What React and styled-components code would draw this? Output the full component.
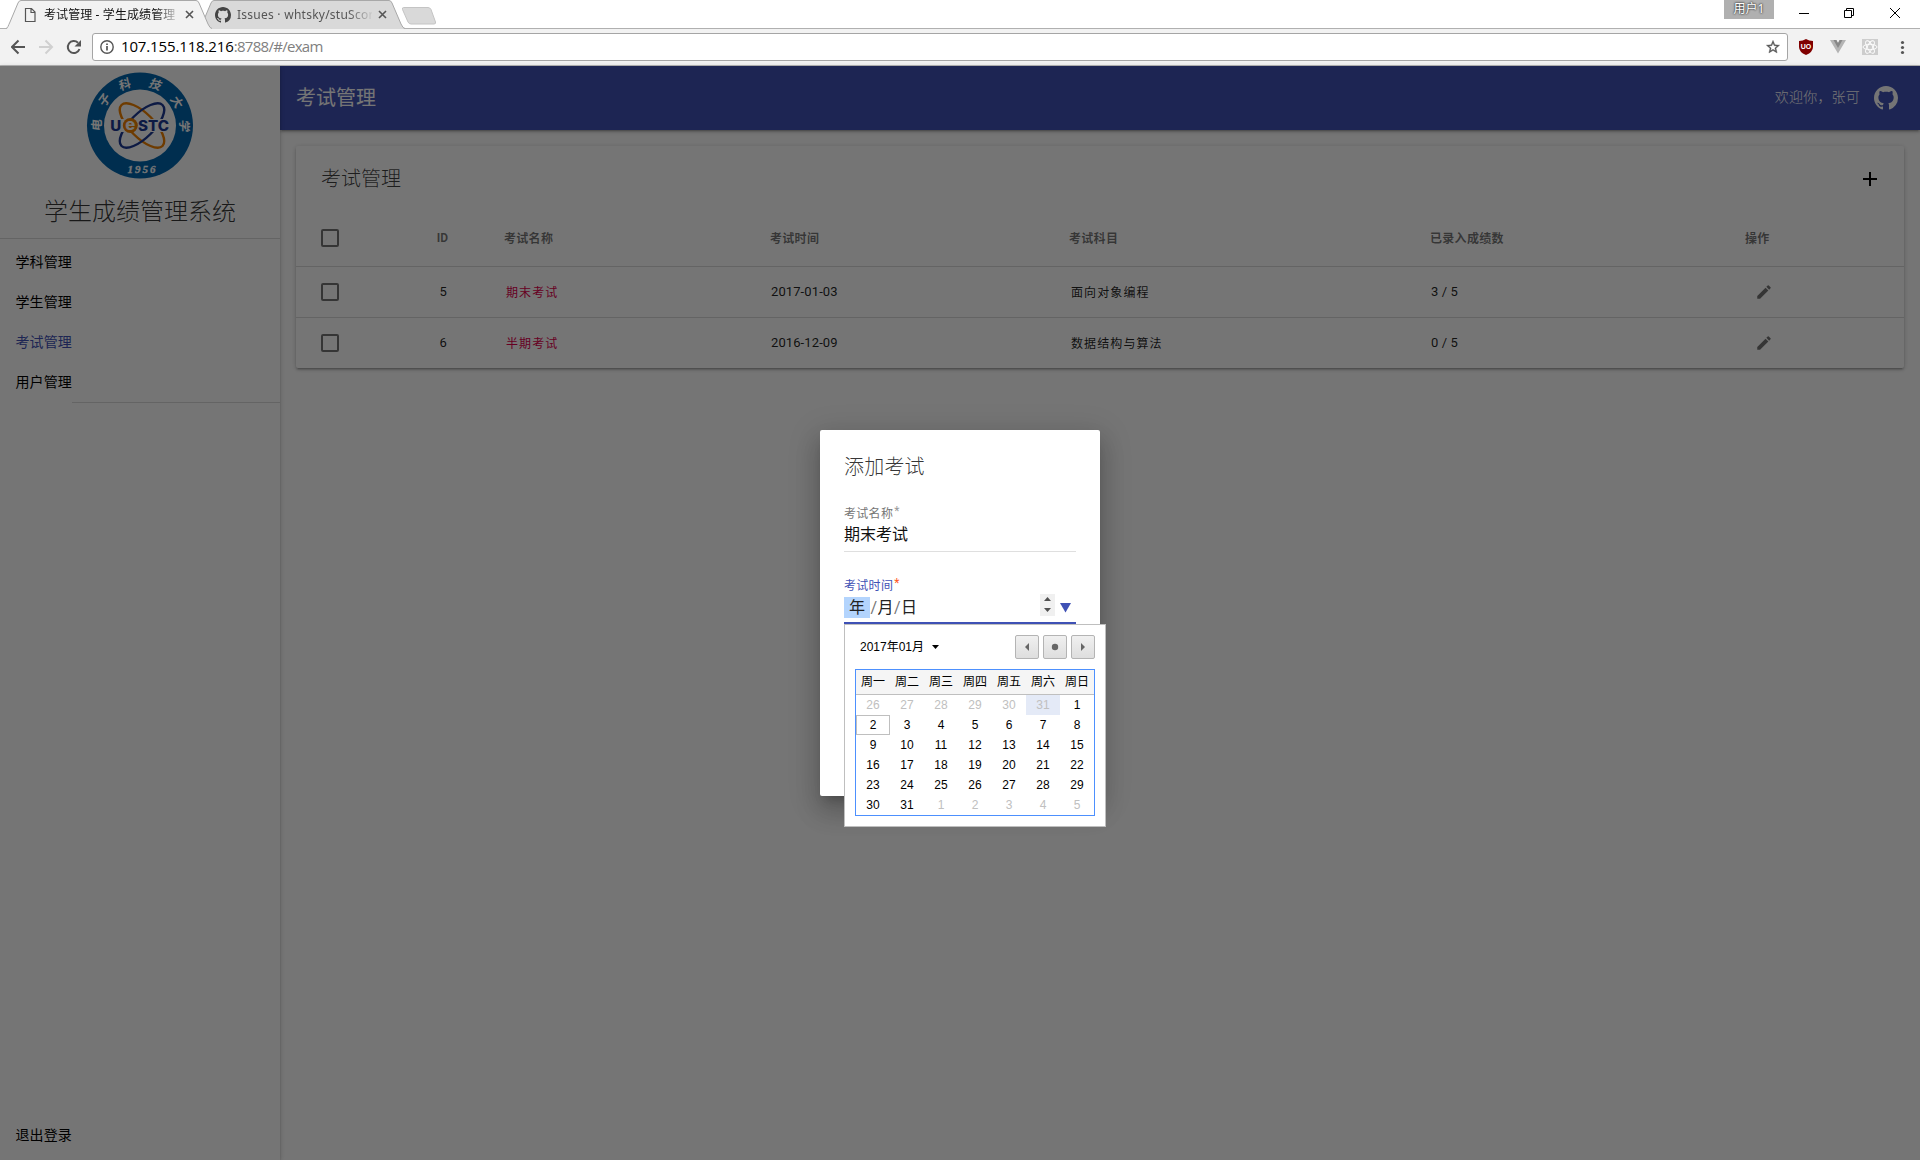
import React from "react";
import styled, { createGlobalStyle, css } from "styled-components";

const Global = createGlobalStyle`
  * { box-sizing: border-box; }
  body { margin: 0; overflow: hidden; background: #fff; font-family: Roboto, "Noto Sans CJK SC", sans-serif; }
`;

const Window = styled.div`
  display: flex;
  flex-direction: column;
  width: 1920px;
  height: 1160px;
`;

/* ---------- browser chrome ---------- */

const TabStrip = styled.div`
  display: flex;
  height: 29px;
  padding-left: 6px;
  background: #fff;
  border-bottom: 1px solid #b0b0b0;
`;

const TabBox = styled.div`
  position: relative;
  width: 206px;
  height: 29px;
  margin-right: ${(p) => (p.$active ? "-13px" : "0")};
  z-index: ${(p) => (p.$active ? 2 : 1)};
`;

const TabShape = styled.svg`
  position: absolute;
  inset: 0;
`;

const TabContent = styled.div`
  position: relative;
  display: flex;
  align-items: center;
  height: 29px;
  padding: 0 18px 0 16px;
`;

const TabTitle = styled.div`
  flex: none;
  width: 135px;
  margin-left: 6px;
  white-space: nowrap;
  font: 12px/20px "Noto Sans", "Noto Sans CJK SC", sans-serif;
  letter-spacing: ${(p) => p.$ls || 0}px;
  color: ${(p) => (p.$active ? "#111" : "#555")};
  mask-image: linear-gradient(to right, #000 82%, transparent 102%);
`;

const CloseIcon = styled.svg`
  flex: none;
  width: 9px;
  height: 9px;
  margin-left: 6px;
`;

const NewTab = styled.svg`
  flex: none;
  width: 36px;
  height: 20px;
  margin: 6px 0 0 -4px;
`;

const WindowButtons = styled.div`
  display: flex;
  align-items: flex-start;
  margin-left: auto;
`;

const UserBadge = styled.div`
  width: 50px;
  height: 19px;
  margin-right: 20px;
  background: #b0b0b0;
  color: #fff;
  text-align: center;
  text-shadow: 0 0 2px #333, 0 0 2px #333;
  font: 12px/18px "Noto Sans", "Noto Sans CJK SC", sans-serif;
`;

const ControlGlyphs = styled.svg`
  width: 126px;
  height: 28px;
`;

const AddressBar = styled.div`
  display: flex;
  align-items: center;
  height: 37px;
  padding: 0 11px;
  background: #f2f2f2;
  border-bottom: 1px solid #b5b5b5;
`;

const NavIcons = styled.svg`
  width: 81px;
  height: 34px;
`;

const UrlField = styled.div`
  display: flex;
  flex: 1;
  align-items: center;
  height: 28px;
  padding: 0 6px 0 7px;
  background: #fff;
  border: 1px solid #a5a5a5;
  border-radius: 3px;
`;

const UrlText = styled.div`
  flex: 1;
  margin-left: 7px;
  padding-bottom: 2px;
  font: 15px/24px "Open Sans", sans-serif;
  letter-spacing: -0.7px;
  color: #808080;
`;

const Host = styled.span`
  letter-spacing: -0.14px;
  color: #000;
`;

const Extensions = styled.svg`
  width: 122px;
  height: 34px;
  margin-right: -1px;
`;

/* ---------- application ---------- */

const Page = styled.div`
  position: relative;
  display: flex;
  flex: 1;
  background: #fff;
`;

const Sidebar = styled.aside`
  display: flex;
  flex-direction: column;
  width: 280px;
  z-index: 2;
  background: #fff;
  box-shadow: 0 1px 5px rgba(0, 0, 0, 0.2), 0 2px 2px rgba(0, 0, 0, 0.14), 0 3px 1px -2px rgba(0, 0, 0, 0.12);
`;

const Brand = styled.div`
  display: flex;
  flex-direction: column;
  align-items: center;
  height: 173px;
  padding-top: 6px;
  border-bottom: 1px solid rgba(0, 0, 0, 0.14);
`;

const BrandName = styled.div`
  margin-top: 14px;
  font-weight: 300;
  font-size: 24px;
  line-height: 36px;
  color: rgba(0, 0, 0, 0.8);
`;

const Menu = styled.nav`
  display: flex;
  flex-direction: column;
  padding-top: 3px;
`;

const MenuItem = styled.a`
  padding-left: 15.5px;
  font-size: 14px;
  line-height: 40px;
  letter-spacing: 0.1px;
  color: ${(p) => (p.$active ? "#3f51b5" : "#000")};
`;

const MenuEnd = styled.div`
  height: 1px;
  margin-left: 72px;
  background: rgba(0, 0, 0, 0.14);
`;

const Logout = styled(MenuItem)`
  margin-top: auto;
  margin-bottom: 5px;
`;

const Main = styled.main`
  display: flex;
  flex: 1;
  flex-direction: column;
`;

const Toolbar = styled.header`
  display: flex;
  align-items: center;
  height: 64px;
  padding: 0 22px 0 16px;
  background: #3f51b5;
  color: #fff;
  box-shadow: 0 1px 5px rgba(0, 0, 0, 0.2), 0 2px 2px rgba(0, 0, 0, 0.14), 0 3px 1px -2px rgba(0, 0, 0, 0.12);
`;

const ToolbarTitle = styled.h1`
  flex: 1;
  margin: 0;
  font-weight: 400;
  font-size: 20px;
  line-height: 28px;
`;

const Welcome = styled.span`
  margin-right: 14px;
  padding-bottom: 4px;
  font-weight: 300;
  font-size: 14px;
  letter-spacing: 0.2px;
`;

const Card = styled.section`
  height: 222px;
  margin: 16px 16px 0 16px;
  border-radius: 2px;
  background: #fff;
  box-shadow: 0 1px 5px rgba(0, 0, 0, 0.2), 0 2px 2px rgba(0, 0, 0, 0.14), 0 3px 1px -2px rgba(0, 0, 0, 0.12);
`;

const CardHeader = styled.div`
  display: flex;
  align-items: center;
  justify-content: space-between;
  height: 64px;
  padding: 1px 27px 0 25px;
`;

const CardTitle = styled.h2`
  margin: 0;
  font-weight: 300;
  font-size: 20px;
  line-height: 28px;
  color: rgba(0, 0, 0, 0.75);
`;

const Row = styled.div`
  display: grid;
  grid-template-columns: 115px 68px 266px 299px 361px 315px 1fr;
  align-items: center;
  height: ${(p) => (p.$head ? 57 : p.$last ? 50 : 51)}px;
  padding-left: 25px;
  border-bottom: ${(p) => (p.$last ? "0" : "1px solid rgba(0, 0, 0, 0.14)")};
`;

const HeadCell = styled.div`
  padding-bottom: 1px;
  font-weight: 700;
  font-size: 12px;
  letter-spacing: ${(p) => (p.$plain ? 0 : 0.3)}px;
  color: rgba(0, 0, 0, 0.54);
`;

const Cell = styled.div`
  padding: 0 0 2px 1px;
  font-size: 13px;
  letter-spacing: 0.1px;
  color: rgba(0, 0, 0, 0.87);
  ${(p) => p.$cjk && css`padding-left: 2px; font-size: 12px; letter-spacing: 1.1px;`}
  ${(p) => p.$accent && css`color: #e0004c;`}
`;

const RightAligned = styled.div`
  width: ${(p) => p.$w}px;
  text-align: right;
`;

const ActionCell = styled.div`
  display: flex;
  padding-left: 10px;
`;

const CheckBox = styled.span`
  display: block;
  width: 18px;
  height: 18px;
  border: 2px solid rgba(0, 0, 0, 0.54);
  border-radius: 2px;
`;

/* ---------- dialog ---------- */

const Backdrop = styled.div`
  position: absolute;
  inset: 0;
  z-index: 5;
  display: flex;
  align-items: center;
  justify-content: center;
  background: rgba(0, 0, 0, 0.54);
`;

const Dialog = styled.div`
  width: 280px;
  height: 366px;
  padding: 24px;
  border-radius: 2px;
  background: #fff;
  box-shadow: 0 8px 10px -5px rgba(0, 0, 0, 0.2), 0 16px 24px 2px rgba(0, 0, 0, 0.14), 0 6px 30px 5px rgba(0, 0, 0, 0.12);
`;

const DialogTitle = styled.h2`
  margin: 0 0 26px;
  font-weight: 300;
  font-size: 20px;
  line-height: 26px;
  letter-spacing: 0.2px;
  color: rgba(0, 0, 0, 0.8);
`;

const Field = styled.div`
  position: relative;
  width: 232px;
  height: 46px;
  margin-bottom: 26px;
  border-bottom: ${(p) => (p.$focus ? "2px solid #3f51b5" : "1px solid #dfdfdf")};
`;

const Label = styled.div`
  font-size: 12px;
  line-height: 16px;
  letter-spacing: 0.3px;
  color: ${(p) => (p.$focus ? "#3f51b5" : "#757575")};
`;

const Star = styled.sup`
  margin-left: 1px;
  font-size: 12px;
  line-height: 0;
  vertical-align: 3px;
  color: ${(p) => (p.$focus ? "#ff5722" : "#9a9a9a")};
`;

const Value = styled.div`
  margin-top: 3px;
  font-size: 16px;
  line-height: 20px;
  color: #111;
`;

const DateValue = styled.div`
  display: flex;
  align-items: center;
  height: 26px;
  font-size: 16px;
  line-height: 21px;
  color: #222;
`;

const YearPart = styled.span`
  width: 26px;
  height: 21px;
  text-align: center;
  background: #b3d4fd;
`;

const Slash = styled.span`
  width: 7.5px;
  text-align: center;
  color: #757575;
`;

const DateControls = styled.svg`
  width: 36px;
  height: 26px;
  margin-left: auto;
`;

const Picker = styled.div`
  position: absolute;
  top: 46px;
  left: 0;
  width: 262px;
  height: 203px;
  padding: 10px;
  border: 1px solid #bfbfbf;
  background: #fff;
  color: #000;
  font: 12px/20px "Liberation Sans", "Noto Sans CJK SC", sans-serif;
`;

const PickerHeader = styled.div`
  display: flex;
  align-items: center;
  height: 24px;
  margin-bottom: 10px;
  gap: 4px;
`;

const MonthLabel = styled.div`
  display: flex;
  flex: 1;
  align-items: center;
  gap: 8px;
  padding-left: 5px;
`;

const StepButton = styled.div`
  display: flex;
  align-items: center;
  justify-content: center;
  width: 24px;
  height: 24px;
  border: 1px solid #b4b4b4;
  border-radius: 2px;
  background: linear-gradient(#f0f0f0, #dedede);
`;

const Calendar = styled.div`
  display: grid;
  grid-template-columns: repeat(7, 34px);
  grid-template-rows: 25px repeat(6, 20px);
  border: 1px solid #4d90fe;
`;

const WeekDay = styled.div`
  background: #f5f5f5;
  border-bottom: 1px solid #bfbfbf;
  line-height: 24px;
  text-align: center;
`;

const Day = styled.div`
  text-align: center;
  line-height: 20px;
  color: ${(p) => (p.$dim ? "#c0c0c0" : "#000")};
  background: ${(p) => (p.$selected ? "#e4eaf7" : "transparent")};
  ${(p) => p.$today && css`border: 1px solid #bfbfbf; line-height: 18px;`}
`;

const GITHUB =
  "M8 0C3.58 0 0 3.58 0 8c0 3.54 2.29 6.53 5.47 7.59.4.07.55-.17.55-.38 0-.19-.01-.82-.01-1.49-2.01.37-2.53-.49-2.69-.94-.09-.23-.48-.94-.82-1.13-.28-.15-.68-.52-.01-.53.63-.01 1.08.58 1.23.82.72 1.21 1.87.87 2.33.66.07-.52.28-.87.51-1.07-1.78-.2-3.64-.89-3.64-3.95 0-.87.31-1.59.82-2.15-.08-.2-.36-1.02.08-2.12 0 0 .67-.21 2.2.82.64-.18 1.32-.27 2-.27.68 0 1.36.09 2 .27 1.53-1.04 2.2-.82 2.2-.82.44 1.1.16 1.92.08 2.12.51.56.82 1.27.82 2.15 0 3.07-1.87 3.75-3.65 3.95.29.25.54.73.54 1.48 0 1.07-.01 1.93-.01 2.2 0 .21.15.46.55.38A8.013 8.013 0 0016 8c0-4.42-3.58-8-8-8z";

const GithubMark = ({ size, color }) => (
  <svg width={size} height={size} viewBox="0 0 16 16" fill={color}>
    <path d={GITHUB} />
  </svg>
);

const Cross = () => (
  <CloseIcon viewBox="0 0 9 9">
    <path d="M1 1l7 7M8 1l-7 7" stroke="#555" strokeWidth="1.6" />
  </CloseIcon>
);

const TabFrame = ({ fill }) => (
  <TabShape width="206" height="29" viewBox="0 0 206 29">
    <path d="M0 29 C3 28 2 26 4 22 L12 3 Q13 .5 15 .5 H190 Q192 .5 193 3 L202 24 Q204 28.5 206 29 Z" fill={fill} />
    <path d="M0 28.5 C2 28 2 26 4 22 L12 3 Q13 .5 15 .5 H190 Q192 .5 193 3 L202 24 Q204 28.5 206 28.5" fill="none" stroke="#a8a8a8" />
  </TabShape>
);

const ringGlyphs = [
  ["电", -90],
  ["子", -55],
  ["科", -21],
  ["技", 20],
  ["大", 57],
  ["学", 90],
];

const Emblem = () => (
  <svg width="108" height="108" viewBox="-54 -53.5 108 108">
    <circle r="53" fill="#0064ad" />
    <circle r="36" fill="#fff" />
    {ringGlyphs.map(([ch, a]) => (
      <text
        key={ch}
        transform={`rotate(${a}) translate(0 -39.500) skewX(-8)`}
        textAnchor="middle"
        fill="#fff"
        fontFamily="Noto Sans CJK SC, sans-serif"
        fontSize="12"
        fontWeight="700"
      >
        {ch}
      </text>
    ))}
    <g fill="none" strokeWidth="2.4">
      <ellipse cx="2" rx="29" ry="12" transform="rotate(45 2 0)" stroke="#ef8200" />
      <ellipse cx="2" rx="29" ry="12" transform="rotate(-45 2 0)" stroke="#1d3a94" />
    </g>
    <rect x="-30" y="-6.500" width="60" height="13" fill="#fff" />
    <circle cx="-9.700" cy="0" r="7.5" fill="#ef8200" />
    <g fontFamily="Inter, sans-serif" fontWeight="800">
      <text x="-29.800" y="5.200" fontSize="14" textLength="11" lengthAdjust="spacingAndGlyphs" fill="#1d3a94">U</text>
      <text x="-14.800" y="4.600" fontSize="16" textLength="10" lengthAdjust="spacingAndGlyphs" fill="#fff">e</text>
      <text x="-2" y="5.200" fontSize="14" textLength="31" lengthAdjust="spacingAndGlyphs" fill="#1d3a94">STC</text>
    </g>
    <text x="-12.500" y="47.500" fill="#fff" fontFamily="Liberation Serif, serif" fontStyle="italic" fontWeight="700" fontSize="11" textLength="28" stroke="#fff" strokeWidth="0.3">1956</text>
  </svg>
);

const Pencil = () => (
  <svg width="18" height="18" viewBox="0 0 24 24" fill="rgba(0,0,0,.54)">
    <path d="M3 17.25V21h3.75L17.81 9.94l-3.75-3.75L3 17.25zM20.71 7.04a1 1 0 000-1.41l-2.34-2.34a1 1 0 00-1.41 0l-1.83 1.83 3.75 3.75 1.83-1.83z" />
  </svg>
);

const menu = ["学科管理", "学生管理", "考试管理", "用户管理"];
const exams = [
  { id: 5, name: "期末考试", date: "2017-01-03", subject: "面向对象编程", count: "3 / 5" },
  { id: 6, name: "半期考试", date: "2016-12-09", subject: "数据结构与算法", count: "0 / 5" },
];
const weekDays = ["周一", "周二", "周三", "周四", "周五", "周六", "周日"];
const days = Array.from({ length: 42 }, (_, i) => {
  if (i < 6) return { n: 26 + i, dim: true, selected: i === 5 };
  if (i > 36) return { n: i - 36, dim: true };
  return { n: i - 5, today: i === 7 };
});

const Chrome = () => (
  <>
    <TabStrip>
      <TabBox $active>
        <TabFrame fill="#f2f2f2" />
        <TabContent>
          <svg width="16" height="16" viewBox="0 0 16 16" fill="none" stroke="#555" strokeWidth="1.2">
            <path d="M3.5 1.5h6l3.5 3.5v9.5h-9.5zM9 1.5v4h4" />
          </svg>
          <TabTitle $active $ls={0.1}>考试管理 - 学生成绩管理</TabTitle>
          <Cross />
        </TabContent>
      </TabBox>
      <TabBox>
        <TabFrame fill="#d9d9d9" />
        <TabContent>
          <GithubMark size={16} color="#444" />
          <TabTitle $ls={0.25}>Issues · whtsky/stuScor</TabTitle>
          <Cross />
        </TabContent>
      </TabBox>
      <NewTab viewBox="0 0 36 20">
        <path d="M2.500 1.500H27Q29 1.500 30 3.500L34.500 16Q35 18 33 18H10Q8 18 7 16L1.500 3.500Q1 1.500 2.500 1.500Z" fill="#d9d9d9" stroke="#c4c4c4" />
      </NewTab>
      <WindowButtons>
        <UserBadge>用户1</UserBadge>
        <ControlGlyphs viewBox="0 0 126 28" fill="none" stroke="#000">
          <path d="M5 13.500h10M50.500 10.500h7v7h-7zM52.500 10.500v-2h7v7h-2M96 8l10 10M106 8l-10 10" />
        </ControlGlyphs>
      </WindowButtons>
    </TabStrip>
    <AddressBar>
      <NavIcons viewBox="11 30 81 34" fill="none" stroke="#555" strokeWidth="2">
        <path d="M25 47H12.500M18.500 40.500L12 47l6.500 6.500" />
        <path d="M39 47h12.500M45.500 40.500L52 47l-6.500 6.500" stroke="#d0d0d0" />
        <path d="M79.500 49a6 6 0 1 1-1.500-6.300" />
        <path d="M81 40v6.500h-6.500z" fill="#555" stroke="none" />
      </NavIcons>
      <UrlField>
        <svg width="14" height="14" viewBox="0 0 14 14" fill="none" stroke="#555">
          <circle cx="7" cy="7" r="6.200" strokeWidth="1.400" />
          <path d="M7 6v4.500M7 3.400v1.700" strokeWidth="1.700" />
        </svg>
        <UrlText>
          <Host>107.155.118.216</Host>:8788/#/exam
        </UrlText>
        <svg width="16" height="16" viewBox="0 0 24 24" fill="#555" stroke="#555" strokeWidth="0.500">
          <path d="M22 9.240l-7.190-.62L12 2 9.190 8.630 2 9.240l5.460 4.730L5.820 21 12 17.270 18.180 21l-1.630-7.030L22 9.240zM12 15.400l-3.760 2.270 1-4.280-3.320-2.880 4.380-.38L12 6.100l1.710 4.040 4.380.38-3.320 2.880 1 4.280L12 15.400z" />
        </svg>
      </UrlField>
      <Extensions viewBox="1788 30 122 34">
        <path d="M1806 39Q1803 41 1799 41V47Q1799 52 1806 55Q1813 52 1813 47V41Q1809 41 1806 39Z" fill="#800000" />
        <text x="1806" y="49" fill="#fff" fontSize="7" fontWeight="700" fontFamily="Liberation Sans, sans-serif" textAnchor="middle">UO</text>
        <path d="M1830 40h6l2 3.500 2-3.500h6l-8 13.500z" fill="#b4b4b4" />
        <path d="M1833.500 40h3l1.500 3 1.500-3h3l-4.500 8z" fill="#888" />
        <rect x="1862" y="39" width="16" height="16" fill="#cdcdcd" />
        <g fill="none" stroke="#fff" strokeWidth="0.900">
          <ellipse cx="1870" cy="47" rx="7" ry="2.700" />
          <ellipse cx="1870" cy="47" rx="7" ry="2.700" transform="rotate(60 1870 47)" />
          <ellipse cx="1870" cy="47" rx="7" ry="2.700" transform="rotate(120 1870 47)" />
        </g>
        <g fill="#555">
          <circle cx="1902.500" cy="42.500" r="1.600" />
          <circle cx="1902.500" cy="47.500" r="1.600" />
          <circle cx="1902.500" cy="52.500" r="1.600" />
        </g>
      </Extensions>
    </AddressBar>
  </>
);

const DatePicker = () => (
  <Picker>
    <PickerHeader>
      <MonthLabel>
        2017年01月
        <svg width="7" height="4"><path d="M0 0h7L3.500 4z" /></svg>
      </MonthLabel>
      <StepButton><svg width="8" height="8" fill="#666"><path d="M6 0v8L2 4z" /></svg></StepButton>
      <StepButton><svg width="8" height="8" fill="#666"><circle cx="4" cy="4" r="3.200" /></svg></StepButton>
      <StepButton><svg width="8" height="8" fill="#666"><path d="M2 0v8l4-4z" /></svg></StepButton>
    </PickerHeader>
    <Calendar>
      {weekDays.map((d) => <WeekDay key={d}>{d}</WeekDay>)}
      {days.map((d, i) => (
        <Day key={i} $dim={d.dim} $selected={d.selected} $today={d.today}>{d.n}</Day>
      ))}
    </Calendar>
  </Picker>
);

const AddExamDialog = () => (
  <Backdrop>
    <Dialog>
      <DialogTitle>添加考试</DialogTitle>
      <Field>
        <Label>考试名称<Star>*</Star></Label>
        <Value>期末考试</Value>
      </Field>
      <Field $focus>
        <Label $focus>考试时间<Star $focus>*</Star></Label>
        <DateValue>
          <YearPart>年</YearPart>
          <Slash>/</Slash>月<Slash>/</Slash>日
          <DateControls viewBox="0 0 36 26">
            <rect y="-2" width="15" height="24" fill="#f0f0f0" />
            <path d="M4 7h7L7.500 3zM4 14h7l-3.500 4z" fill="#505050" />
            <path d="M20 9h11l-5.500 9.500z" fill="#3f51b5" />
          </DateControls>
        </DateValue>
        <DatePicker />
      </Field>
    </Dialog>
  </Backdrop>
);

export default function App() {
  return (
    <Window>
      <Global />
      <Chrome />
      <Page>
        <Sidebar>
          <Brand>
            <Emblem />
            <BrandName>学生成绩管理系统</BrandName>
          </Brand>
          <Menu>
            {menu.map((m) => <MenuItem key={m} $active={m === "考试管理"}>{m}</MenuItem>)}
            <MenuEnd />
          </Menu>
          <Logout>退出登录</Logout>
        </Sidebar>
        <Main>
          <Toolbar>
            <ToolbarTitle>考试管理</ToolbarTitle>
            <Welcome>欢迎你，张可</Welcome>
            <GithubMark size={24} color="#fff" />
          </Toolbar>
          <Card>
            <CardHeader>
              <CardTitle>考试管理</CardTitle>
              <svg width="14" height="14" stroke="#000" strokeWidth="2"><path d="M0 7h14M7 0v14" /></svg>
            </CardHeader>
            <Row $head>
              <CheckBox />
              <HeadCell $plain><RightAligned $w={12}>ID</RightAligned></HeadCell>
              <HeadCell>考试名称</HeadCell>
              <HeadCell>考试时间</HeadCell>
              <HeadCell>考试科目</HeadCell>
              <HeadCell>已录入成绩数</HeadCell>
              <HeadCell>操作</HeadCell>
            </Row>
            {exams.map((e, i) => (
              <Row key={e.id} $last={i === exams.length - 1}>
                <CheckBox />
                <Cell><RightAligned $w={10}>{e.id}</RightAligned></Cell>
                <Cell $cjk $accent>{e.name}</Cell>
                <Cell>{e.date}</Cell>
                <Cell $cjk>{e.subject}</Cell>
                <Cell>{e.count}</Cell>
                <ActionCell><Pencil /></ActionCell>
              </Row>
            ))}
          </Card>
        </Main>
        <AddExamDialog />
      </Page>
    </Window>
  );
}
